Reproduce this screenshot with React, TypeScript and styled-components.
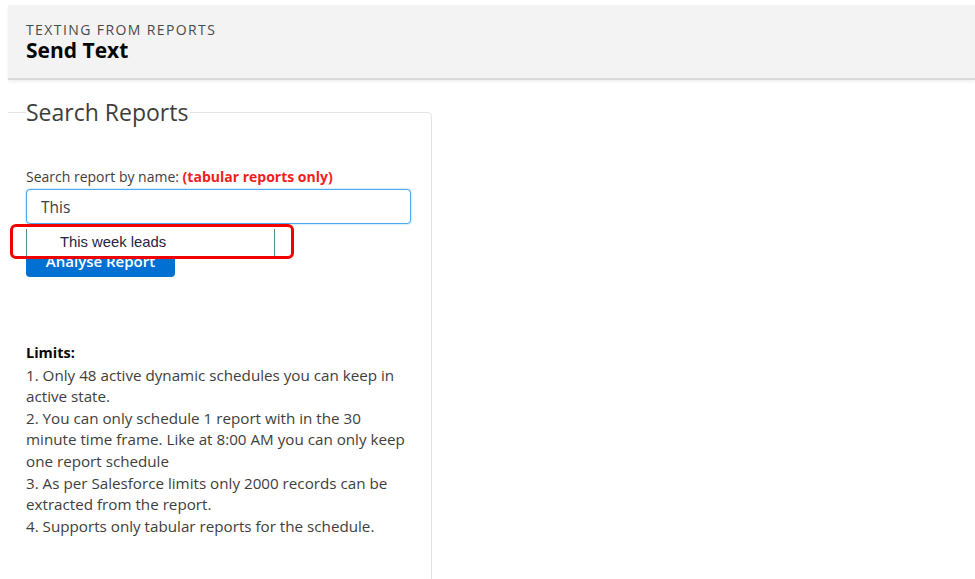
import React from 'react'
import styled, { createGlobalStyle } from 'styled-components'

const GlobalStyle = createGlobalStyle`
  html, body {
    margin: 0;
    padding: 0;
    background: #ffffff;
    font-family: 'Open Sans', 'Noto Sans', sans-serif;
    overflow: hidden;
  }
`

const Page = styled.div`
  padding: 5px 0 0 8px;
  height: 574px;
  display: flex;
  flex-direction: column;
`

const Header = styled.header`
  background: #f3f3f3;
  height: 75px;
  border-bottom: 2px solid #d9d9d9;
  box-shadow: 0 2px 3px rgba(0, 0, 0, 0.06);
  padding: 16px 18px 0;
  box-sizing: border-box;
`

const Eyebrow = styled.div`
  font-size: 14px;
  line-height: 18px;
  letter-spacing: 1.4px;
  color: #4a4a4a;
  text-transform: uppercase;
`

const Title = styled.h1`
  margin: 0;
  font-size: 21px;
  line-height: 22px;
  font-weight: 700;
  color: #080707;
`

const Panel = styled.fieldset`
  margin: 17px 0 0 0;
  width: 424px;
  flex: 1;
  box-sizing: border-box;
  border: none;
  border-top: 1px solid #e3e3e3;
  border-right: 1px solid #e3e3e3;
  border-top-right-radius: 5px;
  padding: 0 20px 0 18px;
  min-width: 0;
`

const Legend = styled.legend`
  font-size: 23px;
  line-height: 30px;
  color: #3e3e3c;
  padding: 0 2px 0 0;
`

const Label = styled.div`
  margin-top: 41px;
  font-size: 14px;
  line-height: 18px;
  color: #3e3e3c;
`

const Hint = styled.span`
  color: #f21d1d;
  font-weight: 700;
`

const Field = styled.div`
  position: relative;
  margin-top: 3px;
  width: 385px;
`

const Input = styled.input`
  display: block;
  width: 100%;
  height: 35px;
  box-sizing: border-box;
  border: 1px solid #4ea7f2;
  box-shadow: 0 0 2px #7cc0f7;
  border-radius: 4px;
  padding: 0 14px;
  font-family: inherit;
  font-size: 15.5px;
  color: #3e3e3c;
  outline: none;
  background: #fff;
`

const Suggestions = styled.ul`
  position: absolute;
  z-index: 2;
  top: 40px;
  left: 0;
  width: 249px;
  margin: 0;
  padding: 0;
  list-style: none;
  background: #fff;
  border-left: 1px solid #4f8f94;
  border-right: 1px solid #4f8f94;
  box-sizing: border-box;
`

const Suggestion = styled.li`
  height: 27px;
  line-height: 27px;
  padding-left: 33px;
  font-family: 'Liberation Sans', Arial, sans-serif;
  font-size: 14.8px;
  color: #26243f;
`

const Highlight = styled.div`
  position: absolute;
  z-index: 3;
  top: 35px;
  left: -16px;
  width: 284px;
  height: 35px;
  box-sizing: border-box;
  border: 3.5px solid #f10000;
  border-radius: 6px;
  pointer-events: none;
`

const Button = styled.button`
  display: block;
  margin-top: 21px;
  width: 149px;
  height: 32px;
  border: none;
  border-radius: 4px;
  background: #0070d2;
  color: #fff;
  font-family: inherit;
  font-size: 15px;
  font-weight: 600;
`

const Limits = styled.div`
  margin-top: 65px;
  font-size: 15.2px;
  line-height: 21.6px;
  color: #3e3e3c;
  width: 386px;
`

const LimitsTitle = styled.div`
  font-weight: 700;
  font-size: 14.5px;
  color: #080707;
  margin-bottom: 1px;
`

const limits = [
  '1. Only 48 active dynamic schedules you can keep in active state.',
  '2. You can only schedule 1 report with in the 30 minute time frame. Like at 8:00 AM you can only keep one report schedule',
  '3. As per Salesforce limits only 2000 records can be extracted from the report.',
  '4. Supports only tabular reports for the schedule.',
]

export default function App(): JSX.Element {
  return (
    <>
      <GlobalStyle />
      <Page>
        <Header>
          <Eyebrow>Texting from reports</Eyebrow>
          <Title>Send Text</Title>
        </Header>
        <Panel>
          <Legend>Search Reports</Legend>
          <Label>
            Search report by name: <Hint>(tabular reports only)</Hint>
          </Label>
          <Field>
            <Input defaultValue="This" />
            <Suggestions>
              <Suggestion>This week leads</Suggestion>
            </Suggestions>
            <Highlight />
          </Field>
          <Button>Analyse Report</Button>
          <Limits>
            <LimitsTitle>Limits:</LimitsTitle>
            {limits.map((l) => (
              <div key={l}>{l}</div>
            ))}
          </Limits>
        </Panel>
      </Page>
    </>
  )
}
